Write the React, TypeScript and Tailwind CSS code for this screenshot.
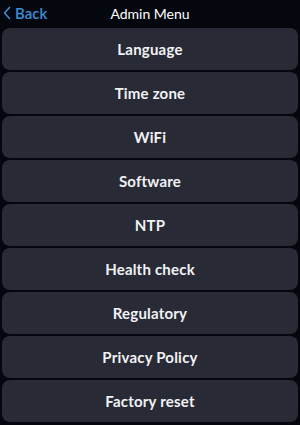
import React from "react";

const items = [
  "Language",
  "Time zone",
  "WiFi",
  "Software",
  "NTP",
  "Health check",
  "Regulatory",
  "Privacy Policy",
  "Factory reset",
];

export default function App() {
  return (
    <div
      className="w-[300px] h-[425px] bg-[#05070f] text-white overflow-hidden flex flex-col"
      style={{ fontFamily: "Lato, 'Open Sans', sans-serif" }}
    >
      <div className="relative h-[28px] pb-[2px] flex items-center justify-center shrink-0">
        <div className="absolute left-[3px] top-0 h-[26px] flex items-center gap-[4px] text-[#3d8fd6] text-[15px] font-semibold">
          <svg width="8" height="14" viewBox="0 0 8 14" fill="none">
            <path d="M6.5 1.5 L1.5 7 L6.5 12.5" stroke="#3d8fd6" strokeWidth="1.5" strokeLinecap="round" strokeLinejoin="round" />
          </svg>
          <span>Back</span>
        </div>
        <span className="text-[14px] text-white">Admin Menu</span>
      </div>
      <div className="flex flex-col gap-[2px] px-[2px]">
        {items.map((t) => (
          <div
            key={t}
            className="h-[42px] rounded-[8px] bg-[#282b36] flex items-center justify-center text-[15px] font-bold tracking-[0.2px] text-[#f2f2f4]"
          >
            {t}
          </div>
        ))}
      </div>
    </div>
  );
}
